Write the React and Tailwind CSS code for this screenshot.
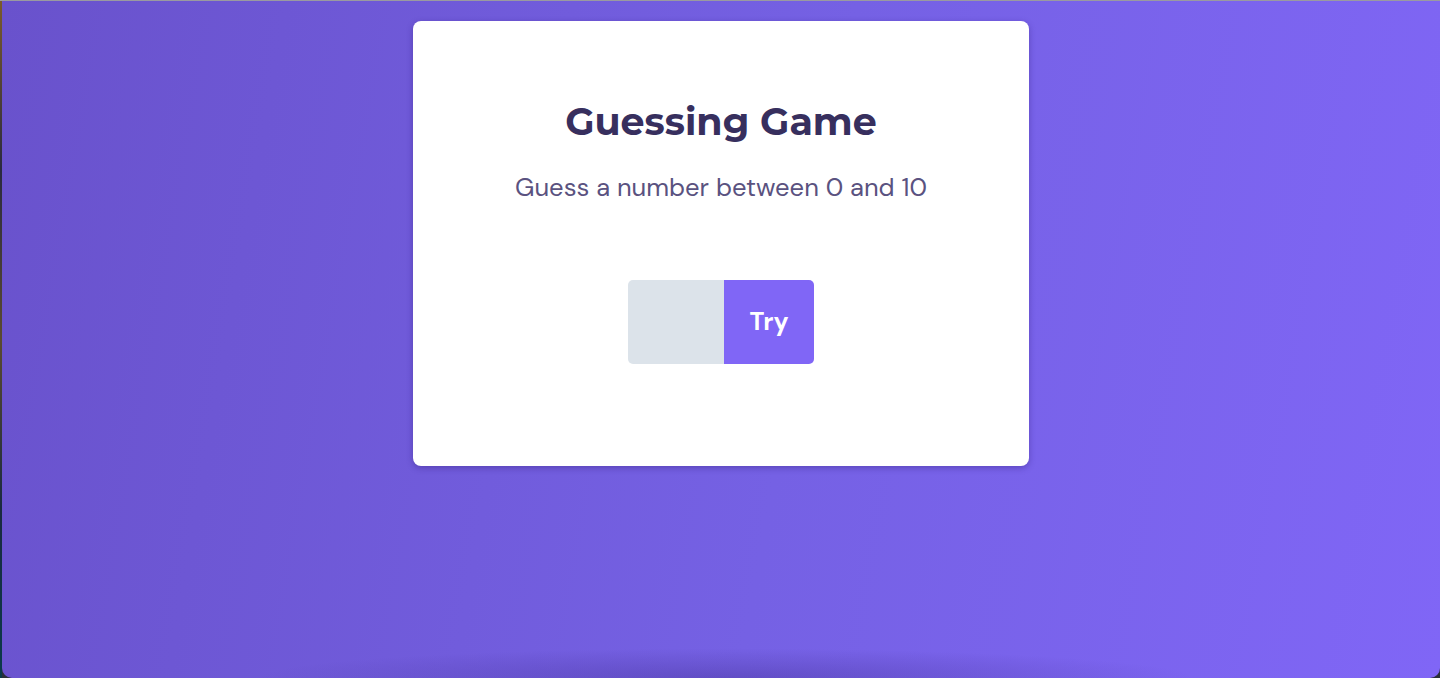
export default function App() {
  return (
    <div className="w-[1440px] h-[678px] bg-[#2a2f3a] overflow-hidden">
      <div className="h-px bg-[#9a9aa0]" />
      <div className="flex h-[677px]">
        <div className="w-[2px] bg-[linear-gradient(180deg,#7a5a2a,#2a2a40,#5a4a30,#1a2a40,#0a3a4a)]" />
        <div className="relative flex-1 rounded-bl-[10px] rounded-br-[10px] bg-[linear-gradient(100deg,#6952cc_0%,#7561e4_55%,#8066f6_100%)] flex justify-center pt-5">
          <div className="pointer-events-none absolute left-[250px] right-[240px] bottom-0 h-[30px] bg-[radial-gradient(ellipse_at_bottom,rgba(60,40,140,0.35),transparent_70%)]" />
          <div className="w-[616px] h-[445px] bg-white rounded-[8px] shadow-[0_2px_6px_rgba(40,20,110,0.35)] flex flex-col items-center">
            <h1 className="mt-[78px] text-[38px] leading-[46px] font-bold text-[#372f5e]" style={{ fontFamily: '"Montserrat", "Inter", "Open Sans", sans-serif' }}>
              Guessing Game
            </h1>
            <p className="mt-[27px] text-[25.6px] leading-[32px] text-[#5a5280]" style={{ fontFamily: '"DM Sans", "Inter", "Noto Sans", sans-serif' }}>
              Guess a number between 0 and 10
            </p>
            <div className="mt-[76px] flex h-[84px] rounded-[5px] overflow-hidden">
              <input className="w-[96px] h-full bg-[#dce3ea] outline-none border-0 px-2 text-[22px]" />
              <button className="w-[90px] h-full bg-[#8066f6] text-white text-[25px] font-bold" style={{ fontFamily: '"DM Sans", "Inter", "Noto Sans", sans-serif' }}>
                Try
              </button>
            </div>
          </div>
        </div>
      </div>
    </div>
  );
}
